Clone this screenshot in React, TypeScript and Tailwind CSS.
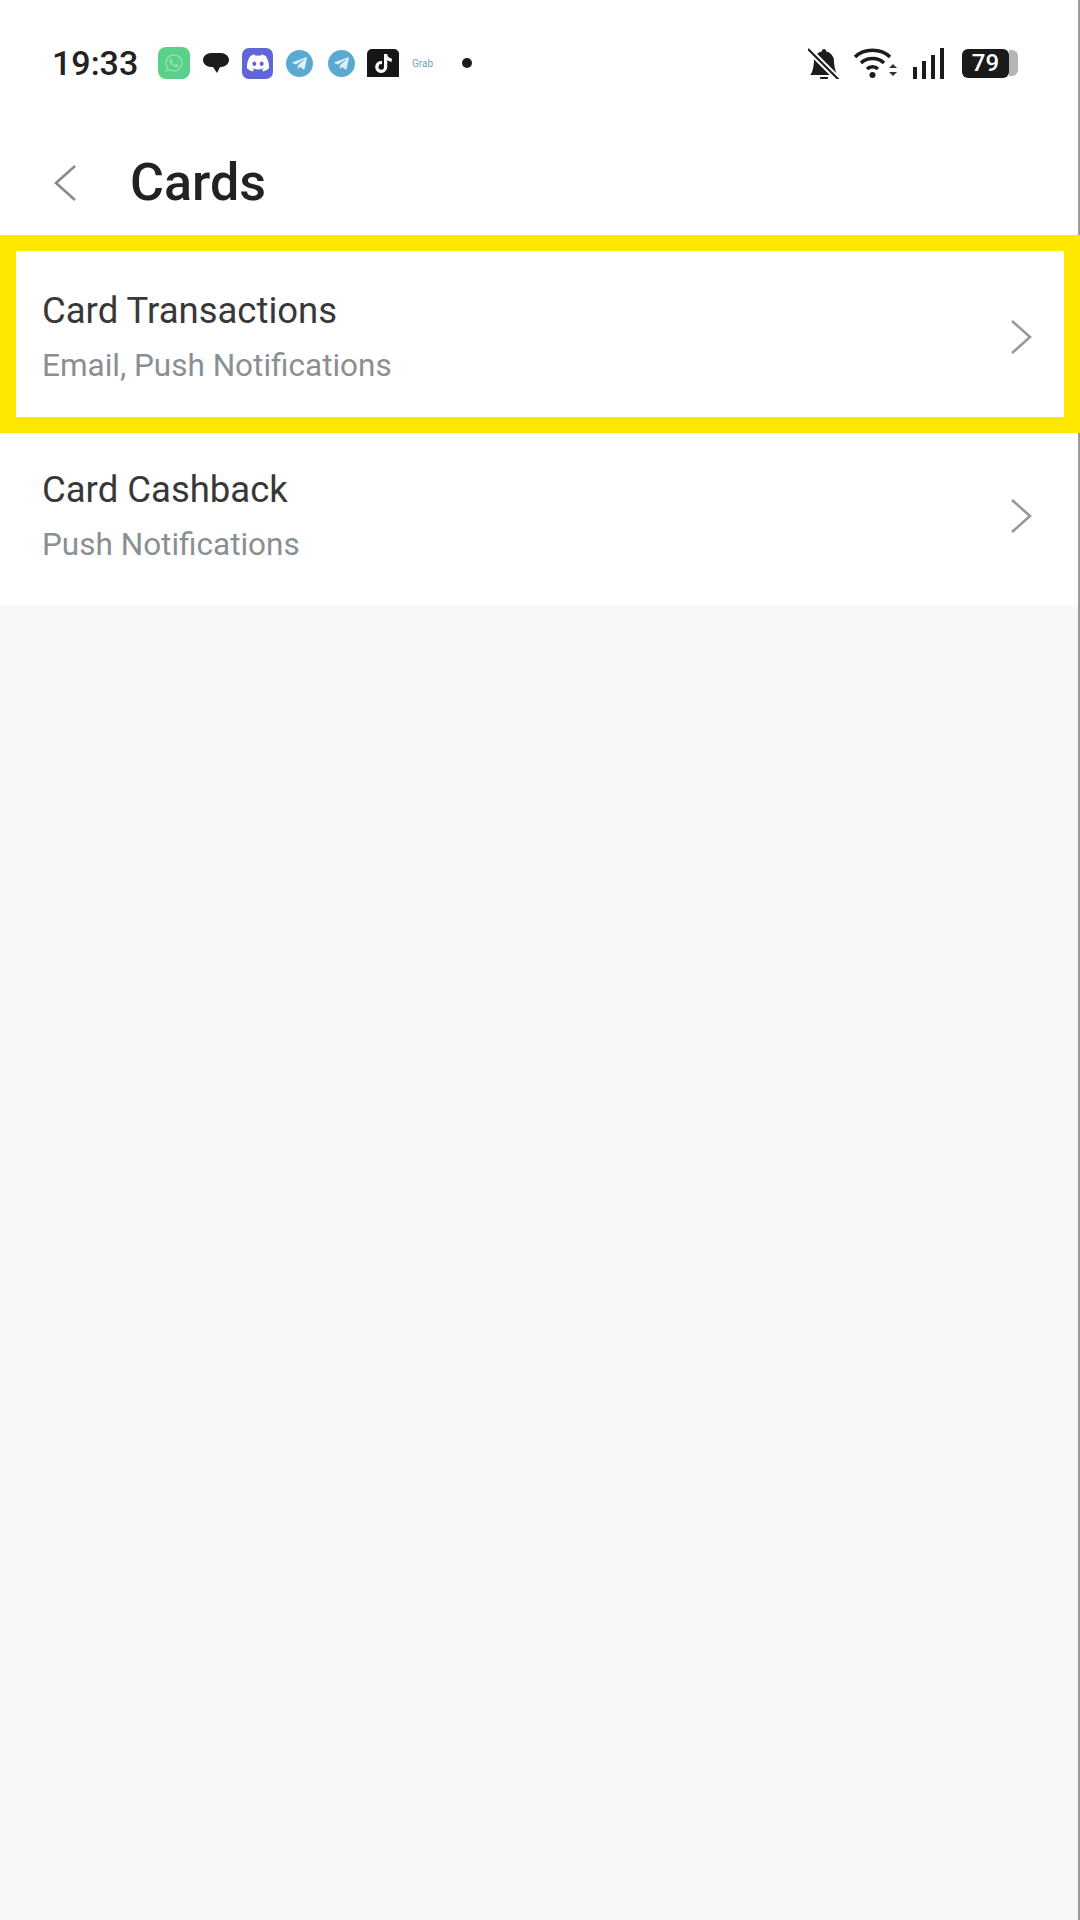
import { BsBellSlashFill } from "react-icons/bs";
import { FaDiscord, FaTelegramPlane, FaTiktok, FaWhatsapp } from "react-icons/fa";

const Wifi = () => (
  <svg width="45" height="34" viewBox="0 0 45 34" fill="none" stroke="#1c1c1c" strokeWidth="3.5">
    <path d="M2 11C11 2 28 2 37 11" />
    <path d="M8 17C14 11 25 11 31 17" />
    <path d="M14 23C17 20 22 20 25 23" />
    <circle cx="19.5" cy="29" r="3" fill="#1c1c1c" stroke="none" />
    <path d="M36 22l4-4 4 4zM36 26l4 4 4-4z" fill="#333" stroke="none" />
  </svg>
);

const Signal = () => (
  <div className="flex items-end gap-[5px]">
    <div className="w-[4px] h-[12px] bg-[#1c1c1c]" />
    <div className="w-[4px] h-[18px] bg-[#1c1c1c]" />
    <div className="w-[4px] h-[24px] bg-[#1c1c1c]" />
    <div className="w-[4px] h-[31px] bg-[#1c1c1c]" />
  </div>
);

const Chevron = ({ left }: { left?: boolean }) => (
  <svg width="24" height="38" viewBox="0 0 24 38" fill="none" stroke={left ? "#8a8a8a" : "#999"} strokeWidth="2.6">
    <path d={left ? "M22 2L3 19L22 36" : "M2 3L20 19L2 35"} />
  </svg>
);

const RowContent = ({ title, sub }: { title: string; sub: string }) => (
  <div className="flex items-center justify-between pr-[16px]">
    <div className="flex flex-col">
      <span className="text-[36.5px] leading-[44px] text-[#383838]">{title}</span>
      <span className="text-[31.5px] leading-[38px] mt-[14px] text-[#8a8f94]">{sub}</span>
    </div>
    <Chevron />
  </div>
);

export default function App() {
  return (
    <div className="w-[1080px] h-[1920px] flex flex-col bg-[#f7f8fa] font-['Roboto',sans-serif]">
      {/* Status bar and title */}
      <div className="h-[235px] shrink-0 bg-white border-r-2 border-[#9a9a9a]">
        <div className="flex items-center h-[32px] mt-[47px] pl-[52px] pr-[60px]">
          <span className="text-[34px] font-medium text-[#222] w-[106px]">19:33</span>
          <div className="flex items-center justify-center w-[32px] h-[32px] rounded-[8px] bg-[#5bd08a]">
            <FaWhatsapp size={20} color="#8fe3b0" />
          </div>
          <div className="ml-[13px] w-[26px] h-[24px] flex items-center">
            <svg width="26" height="24" viewBox="0 0 26 24" fill="#1c1c1c">
              <path d="M8 2h10c4 0 8 3 8 7s-4 7-8 7h-1l-3 6-4-6H8c-4 0-8-3-8-7s4-7 8-7z" />
            </svg>
          </div>
          <div className="ml-[13px] flex items-center justify-center w-[31px] h-[31px] rounded-[7px] bg-[#6065d8]">
            <FaDiscord size={24} color="#fff" />
          </div>
          <div className="ml-[13px] flex items-center justify-center w-[27px] h-[27px] rounded-full bg-[#5aa9d0]">
            <FaTelegramPlane size={17} color="#dcEEf6" />
          </div>
          <div className="ml-[15px] flex items-center justify-center w-[27px] h-[27px] rounded-full bg-[#5aa9d0]">
            <FaTelegramPlane size={17} color="#dcEEf6" />
          </div>
          <div className="ml-[12px] flex items-center justify-center w-[32px] h-[28px] rounded-t-[5px] bg-[#161616]">
            <FaTiktok size={19} color="#fff" />
          </div>
          <span className="ml-[13px] w-[26px] text-[10px] text-[#6aa7b5]">Grab</span>
          <div className="ml-[24px] w-[10px] h-[10px] rounded-full bg-[#1c1c1c]" />
          <div className="ml-auto flex items-center">
            <BsBellSlashFill size={32} color="#1c1c1c" className="-scale-x-100" />
            <div className="ml-[13px]">
              <Wifi />
            </div>
            <div className="ml-[15px]">
              <Signal />
            </div>
            <div className="ml-[18px] flex items-center">
              <div className="flex items-center justify-center w-[47px] h-[29px] rounded-[6px] bg-[#1a1a1a] text-[24px] font-medium text-white">
                79
              </div>
              <div className="w-[9px] h-[26px] rounded-r-[6px] bg-[#b5b5b5]" />
            </div>
          </div>
        </div>
        <div className="flex items-center h-[70px] mt-[69px] pl-[53px]">
          <Chevron left />
          <span className="ml-[53px] text-[52px] font-medium text-[#222]">Cards</span>
        </div>
      </div>

      {/* Highlighted row */}
      <div className="shrink-0 border-[16px] border-[#ffe800] bg-white h-[198px] pt-[38px] pl-[26px] pr-[14px]">
        <RowContent title="Card Transactions" sub="Email, Push Notifications" />
      </div>

      {/* Rest of the list */}
      <div className="flex-1 border-r-2 border-[#9a9a9a]">
        <div className="bg-white h-[172px] pt-[35px] pl-[42px] pr-[28px]">
          <RowContent title="Card Cashback" sub="Push Notifications" />
        </div>
      </div>
    </div>
  );
}
